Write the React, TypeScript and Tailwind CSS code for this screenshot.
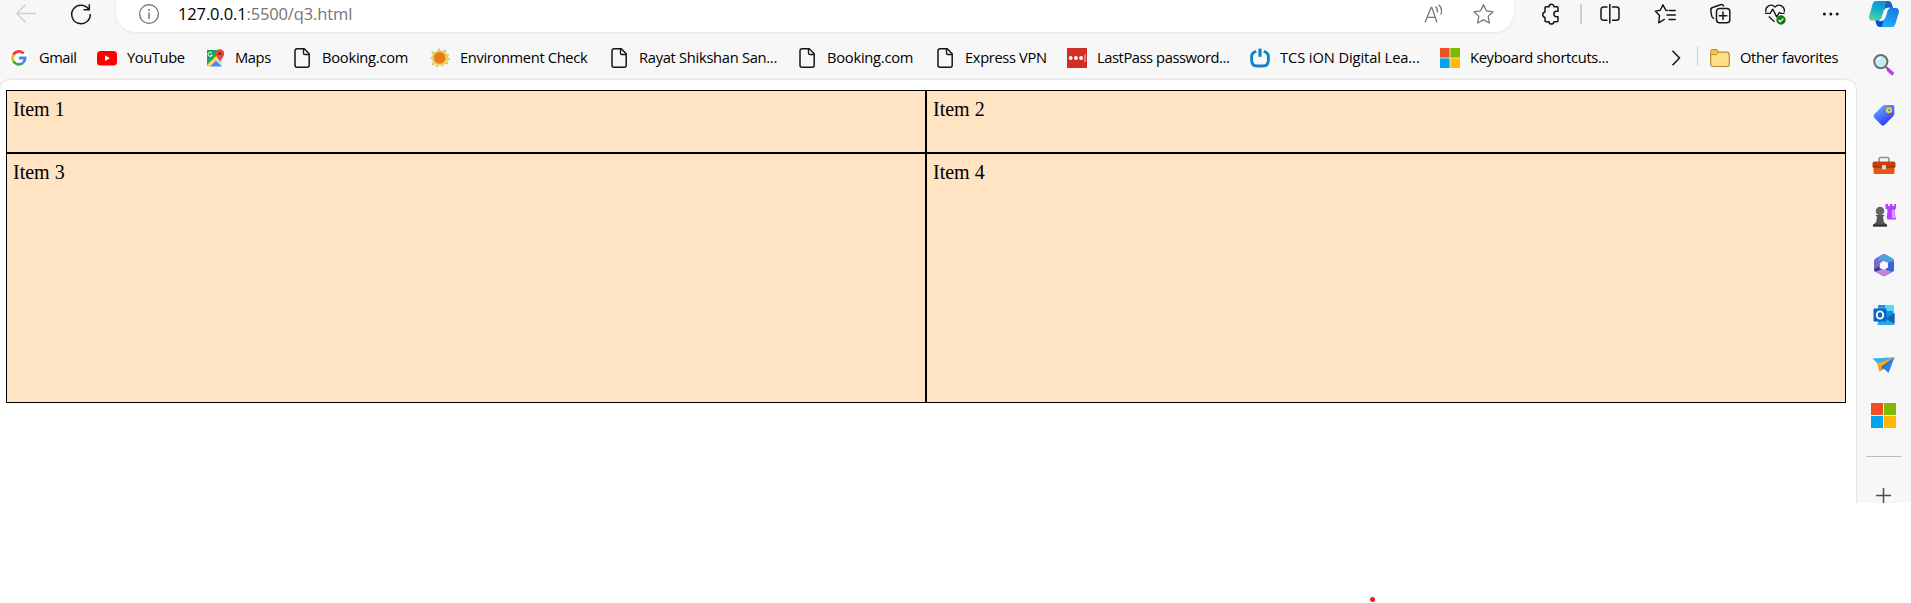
import type { ReactNode } from "react";

type IconProps = { w?: number; h?: number; children: ReactNode; className?: string };

function Icon({ w = 20, h = 20, children, className = "" }: IconProps) {
  return (
    <svg width={w} height={h} viewBox={`0 0 ${w} ${h}`} fill="none" className={`block shrink-0 overflow-visible ${className}`}>
      {children}
    </svg>
  );
}

const FileIcon = () => (
  <Icon>
    <path d="M5 .8h7.2l5 5v11.400a2 2 0 0 1-2 2H5a2 2 0 0 1-2-2V2.800a2 2 0 0 1 2-2Z" stroke="#161616" strokeWidth="1.500" />
    <path d="M11.500 1v4.200a1.300 1.300 0 0 0 1.300 1.300H17" stroke="#161616" strokeWidth="1.400" />
  </Icon>
);

const GoogleIcon = () => (
  <Icon>
    <circle cx="10" cy="10" r="10" fill="#fff" />
    <path d="M4.300 6.900A6.400 6.400 0 0 1 14.700 5.500" stroke="#ea4335" strokeWidth="2.800" />
    <path d="M4.300 6.900a6.400 6.400 0 0 0 0 6.200" stroke="#fbbc05" strokeWidth="2.800" />
    <path d="M4.300 13.100A6.400 6.400 0 0 0 13.900 15" stroke="#34a853" strokeWidth="2.800" />
    <path d="M10 10h6.200c0 2-.9 3.900-2.300 5" stroke="#4285f4" strokeWidth="2.800" />
  </Icon>
);

const YouTubeIcon = () => (
  <Icon>
    <rect x="0" y="3" width="20" height="14.500" rx="3.500" fill="#f00" />
    <path d="m8 7.300 5 2.900-5 2.900Z" fill="#fff" />
  </Icon>
);

const MapsIcon = () => (
  <Icon>
    <path d="M2 2h15v16H2Z" fill="#dfe3e6" />
    <path d="M2 2h11L2 13Z" fill="#1b9a59" />
    <path d="M2 12 11 3l3 4L3 18H2Z" fill="#22a463" />
    <path d="M2 17 13 6l2 2L4 19Z" fill="#ffd94a" />
    <path d="m5 18.500 6-6 6 6Z" fill="#4a89f3" />
    <path d="M7 5.200A2.100 2.100 0 1 0 7.200 7H5.300" stroke="#fff" strokeWidth="1" />
    <path d="M15 14.500c-.4-3.500-4.200-5-4.200-9a4.200 4.200 0 0 1 8.400 0c0 4-3.800 5.500-4.200 9Z" fill="#e04a3f" />
    <circle cx="15" cy="5.500" r="1.600" fill="#7d2a24" />
  </Icon>
);

const SunIcon = () => (
  <Icon>
    <path d="m9 .5 2 3.600L15.500 2l.2 4.200 3 .5-1.400 3 2.700 1.300-3.300 1.500 1 3.500-3.900-.5-1.500 2.500-2.600-1.500L6.500 19l-.8-3.700L2.500 17l.7-4L1 9.500l2.500-1.300L1.800 3.800l4.400 1Z" fill="#f4dc62" stroke="#b8a449" strokeWidth=".5" />
    <circle cx="9.600" cy="9.800" r="5.800" fill="#ea7a16" stroke="#cf9438" strokeWidth=".6" />
  </Icon>
);

const LastPassIcon = () => (
  <Icon>
    <path d="M0 0h20v20H0Z" fill="#d32d27" />
    <circle cx="3.700" cy="10" r="1.900" fill="#fff" />
    <circle cx="8.900" cy="10" r="1.900" fill="#fff" />
    <circle cx="14.100" cy="10" r="1.900" fill="#fff" />
    <path d="M18 6.300v7.500" stroke="#f6c9c7" strokeWidth="1" />
  </Icon>
);

const PowerIcon = () => (
  <Icon>
    <path d="M6.300 3.300C3.300 4.100 1.600 5.800 1.600 8.500v3.500c0 4 2 6 5.500 6h5.800c3.500 0 5.500-2 5.500-6V8.500c0-2.700-1.700-4.400-4.700-5.200" stroke="#1480c8" strokeWidth="2.900" />
    <path d="M10 .6v8.200" stroke="#1480c8" strokeWidth="3.200" />
  </Icon>
);

function MicrosoftIcon({ size }: { size: number }) {
  return (
    <svg width={size} height={size} viewBox="0 0 25 25" className="block shrink-0">
      <path d="M0 0h25v25H0Z" fill="#f6efdc" />
      <path d="M0 0h12v12H0Z" fill="#f25022" />
      <path d="M13 0h12v12H13Z" fill="#7fba00" />
      <path d="M0 13h12v12H0Z" fill="#00a4ef" />
      <path d="M13 13h12v12H13Z" fill="#ffb900" />
    </svg>
  );
}

type Favorite = { label: string; icon: ReactNode; slot: string; tracking: string };

const favorites: Favorite[] = [
  { label: "Gmail", icon: <GoogleIcon />, slot: "w-[88px]", tracking: "tracking-[-0.5px]" },
  { label: "YouTube", icon: <YouTubeIcon />, slot: "w-[108px]", tracking: "tracking-[-0.4px]" },
  { label: "Maps", icon: <MapsIcon />, slot: "w-[87px]", tracking: "tracking-[-0.4px]" },
  { label: "Booking.com", icon: <FileIcon />, slot: "w-[138px]", tracking: "tracking-[-0.25px]" },
  { label: "Environment Check", icon: <SunIcon />, slot: "w-[179px]", tracking: "tracking-[-0.35px]" },
  { label: "Rayat Shikshan San...", icon: <FileIcon />, slot: "w-[188px]", tracking: "tracking-[-0.29px]" },
  { label: "Booking.com", icon: <FileIcon />, slot: "w-[138px]", tracking: "tracking-[-0.25px]" },
  { label: "Express VPN", icon: <FileIcon />, slot: "w-[132px]", tracking: "tracking-[-0.35px]" },
  { label: "LastPass password...", icon: <LastPassIcon />, slot: "w-[183px]", tracking: "tracking-[-0.42px]" },
  { label: "TCS iON Digital Lea...", icon: <PowerIcon />, slot: "w-[190px]", tracking: "tracking-[-0.1px]" },
  { label: "Keyboard shortcuts...", icon: <MicrosoftIcon size={20} />, slot: "w-[231px]", tracking: "tracking-[-0.32px]" },
];

function AddressRow() {
  return (
    <div className="flex h-8 items-start">
      <div className="flex h-7 w-[116px] items-center gap-[35px] pl-4">
        <Icon>
          <path d="M20 9.500H1M9.500.8.800 9.500l8.700 8.700" stroke="#cfcfcf" strokeWidth="1.400" />
        </Icon>
        <Icon>
          <path d="M17.700 5.200A9.300 9.300 0 1 0 19.300 10M18.300.3v5.500h-5.800" stroke="#161616" strokeWidth="1.500" />
        </Icon>
      </div>
      <div className="flex h-8 w-[1398px] items-start rounded-b-[20px] bg-white pl-[23px] shadow-[0_1px_3px_rgba(0,0,0,0.08)]">
        <div className="flex h-7 flex-1 items-center">
          <Icon>
            <circle cx="10" cy="10" r="9.400" stroke="#6b6b6b" strokeWidth="1.200" />
            <path d="M10 8.500V15" stroke="#6b6b6b" strokeWidth="1.400" />
            <circle cx="10" cy="5.900" r="1" fill="#6b6b6b" />
          </Icon>
          <p className="ml-[19px] text-[16.5px] tracking-[-0.13px] text-[#767676]">
            <span className="text-black">127.0.0.1</span>:5500/q3.html
          </p>
        </div>
        <div className="flex h-7 w-[90px] items-center gap-[29px]">
          <Icon>
            <path d="M1 18.500 7.200 3.300h.6L13 18.500M3.200 13.300h8" stroke="#767676" strokeWidth="1.300" />
            <path d="M11.500 2.500c1.800 1.700 2.300 3.700 2 6M14.600.7c3 2.700 3.600 6.500 2.200 10" stroke="#767676" strokeWidth="1.200" />
          </Icon>
          <Icon>
            <path d="m10.500.8 2.900 6 6.600 1-4.800 4.600 1.200 6.600-5.900-3.100L4.600 19l1.200-6.600L1 7.800l6.600-1Z" stroke="#767676" strokeWidth="1.300" strokeLinejoin="round" />
          </Icon>
        </div>
      </div>
      <div className="flex h-7 flex-1 items-center pl-[25.500px] text-[#161616]">
        <Icon>
          <path d="M6 2.700h3.100a2.400 2.400 0 0 1 4.800 0H17a1 1 0 0 1 1 1v3.600h-1.400a2.700 2.700 0 0 0 0 5.400H18v4a1 1 0 0 1-1 1h-3.100a2.400 2.400 0 0 1-4.800 0H6a1 1 0 0 1-1-1v-3.300a2.800 2.800 0 0 1 0-5.500V3.700a1 1 0 0 1 1-1Z" stroke="currentColor" strokeWidth="1.500" strokeLinejoin="round" />
        </Icon>
        <span className="ml-[20px] h-5 w-[2px] bg-[#cdcdcd]" />
        <Icon className="ml-[18.500px]">
          <path d="M7.500 3h-4A2.500 2.500 0 0 0 1 5.500v8.200a2.500 2.500 0 0 0 2.500 2.500h4M12 3h4.500A2.500 2.500 0 0 1 19 5.500v8.200a2.500 2.500 0 0 1-2.500 2.500H12M9.800 0v19.500" stroke="currentColor" strokeWidth="1.500" />
        </Icon>
        <Icon className="ml-[35px]">
          <path d="M12.700 6.500 10.800 6.200 7.900.8 5.300 6.300l-5 .8 4.200 4.300-.8 7.400 5.600-3.500M14.300 6.500H20.300M12 11h8.300M14 15.500h6.300" stroke="currentColor" strokeWidth="1.400" strokeLinejoin="round" strokeLinecap="round" />
        </Icon>
        <Icon className="ml-[35px]">
          <path d="M4.200 14.500A3 3 0 0 1 1.700 12L.800 6.500a3 3 0 0 1 2.500-3.300L10.500.700a2.800 2.800 0 0 1 3.300 1.800" stroke="currentColor" strokeWidth="1.500" />
          <rect x="6.500" y="4.500" width="13.300" height="14.300" rx="3" stroke="currentColor" strokeWidth="1.500" />
          <path d="M13 7.500v8.400M8.800 11.700h8.500" stroke="currentColor" strokeWidth="1.500" />
        </Icon>
        <Icon className="ml-[35px]">
          <path d="M1 8C-.3 2.500 6.300-1.200 10 3.100 13.700-1.200 20.500 2.400 19.200 8M3.800 12.500l5.700 5.300M0 9.300h5.200l2.500-4.200 4 7.800 2.700-4.500 1.200 1h4" stroke="currentColor" strokeWidth="1.300" strokeLinejoin="round" />
          <circle cx="16" cy="16" r="4.700" fill="#107c10" />
          <path d="m13.600 16 1.700 1.700 3-3.200" stroke="#fff" strokeWidth="1.200" />
        </Icon>
        <Icon className="ml-[35.500px]">
          <circle cx="3.400" cy="10" r="1.500" fill="currentColor" />
          <circle cx="9.800" cy="10" r="1.500" fill="currentColor" />
          <circle cx="16.200" cy="10" r="1.500" fill="currentColor" />
        </Icon>
      </div>
    </div>
  );
}

function FavoritesBar() {
  return (
    <div className="flex h-12 items-center pt-1 pl-[9px] text-[14.700px] text-black">
      {favorites.map((item, i) => (
        <div key={i} className={`flex shrink-0 items-center gap-[10px] whitespace-nowrap ${item.slot}`}>
          {item.icon}
          <span className={`pb-[2px] ${item.tracking}`}>{item.label}</span>
        </div>
      ))}
      <Icon w={10} h={16}>
        <path d="m1.500.8 7 7.200-7 7.200" stroke="#161616" strokeWidth="1.500" />
      </Icon>
      <span className="mb-1 ml-[16px] h-5 w-px bg-[#cfcfcf]" />
      <Icon className="ml-[12px]">
        <path d="M.7 4c0-1.500.8-2.300 2.300-2.300h3.500L9 4.200h7.500c1.800 0 2.800 1 2.800 2.700V16c0 1.600-1 2.500-2.500 2.500H3.200C1.600 18.500.7 17.600.7 16Z" fill="#ffe08a" stroke="#b8892c" strokeWidth="1.200" />
        <path d="M1.200 4.300c0-1.300.6-2 1.900-2h3.300l2 2-2 2.200H1.200Z" fill="#f3c53b" />
        <path d="M.9 6.700h5.500l2.500-2.400" stroke="#b8892c" strokeWidth="1" />
      </Icon>
      <span className="ml-[10px] pb-[2px] tracking-[-0.34px] whitespace-nowrap">Other favorites</span>
    </div>
  );
}

const sidebarApps: ReactNode[] = [
  <Icon w={24} h={24}>
    <path d="m14 14 2.800 2.800" stroke="#666" strokeWidth="2.300" />
    <path d="m16.500 17 3.700 3.300" stroke="#b73cf2" strokeWidth="3.600" strokeLinecap="round" />
    <circle cx="8.800" cy="8.600" r="6.600" fill="#c5e9fb" stroke="#6c6c6c" strokeWidth="2" />
    <path d="M5.300 7.800a4.500 4.500 0 0 1 3.700-3.300" stroke="#eefaff" strokeWidth="2" />
  </Icon>,
  <Icon w={24} h={24}>
    <path d="M12.500 2h8.300a1.500 1.500 0 0 1 1.500 1.500V11a3 3 0 0 1-.9 2l-8.700 8.700a2.500 2.500 0 0 1-3.500 0l-7-7a2.500 2.500 0 0 1 0-3.500l8.200-8.300a3 3 0 0 1 2.100-.9Z" fill="url(#tagBlue)" />
    <circle cx="17" cy="7.200" r="2.100" fill="#4f83f3" stroke="#ffd21f" strokeWidth="1.900" />
    <defs><linearGradient id="tagBlue" x1="4" y1="3" x2="16" y2="22" gradientUnits="userSpaceOnUse"><stop stopColor="#67b4ff" /><stop offset="1" stopColor="#3032f5" /></linearGradient></defs>
  </Icon>,
  <Icon w={24} h={24}>
    <path d="M7 9V6.500A2 2 0 0 1 9 4.500h6a2 2 0 0 1 2 2V9" stroke="#8b8f91" strokeWidth="1.500" />
    <path d="M1.500 12h21v7.500a1.500 1.500 0 0 1-1.500 1.500H3a1.500 1.500 0 0 1-1.500-1.500Z" fill="#e0570f" />
    <path d="M2.500 8.500h19a2 2 0 0 1 2 2v3.800H.5v-3.800a2 2 0 0 1 2-2Z" fill="#c93e0d" />
    <path d="M1 14h22" stroke="#94300d" />
    <rect x="10" y="12" width="4" height="4.500" rx=".8" fill="#d4dde0" />
  </Icon>,
  <Icon w={24} h={24}>
    <path d="M13.500 1H16v2h2V1h2.500v2h1.700V1H24v4.500L22.500 7l.8 7 1 2.500h-9L14.700 14l.9-7L13.500 5.500Z" fill="#b641ff" />
    <path d="M20 7h2l1 8h-3Z" fill="#dda0ff" />
    <circle cx="8" cy="8" r="4.300" fill="#666" />
    <path d="M3.500 12h9l-1 1.500H11l.8 5.500 3.200 3v1.500H1V22l3.200-3 .8-5.500h-.5Z" fill="#555" />
    <path d="M1 22.500h14" stroke="#2b2b2b" strokeWidth="1.800" />
  </Icon>,
  <Icon w={24} h={24}>
    <path d="M10.500 1.600a3 3 0 0 1 3 0l7 4a3 3 0 0 1 1.500 2.600v8a3 3 0 0 1-1.500 2.600l-7 4a3 3 0 0 1-3 0l-7-4A3 3 0 0 1 2 16.200v-8a3 3 0 0 1 1.500-2.600Z" fill="#7469cd" />
    <path d="M8 3 10.500 1.600a3 3 0 0 1 3 0l7 4a3 3 0 0 1 1.500 2.600V14l-7.500-5L10 6.500 5 9Z" fill="#49a2e2" />
    <path d="M22 9v7.200a3 3 0 0 1-1.500 2.600l-5 2.800-2.500-4.800 3.500-3.300V9.500l2-1Z" fill="#3a62d2" />
    <path d="m3.500 18.800 7 4a3 3 0 0 0 3 0l6.500-3.700-5.500-2-5.500-1-5.500 1.500Z" fill="#c084dc" />
    <path d="M3.500 18.800A3 3 0 0 1 2 16.200L7.500 13v2l2 1.500Z" fill="#40407f" />
    <path d="m11 7.800 5 2v4.500l-3.500 2.800-4.700-2v-4.500Z" fill="#f7f7f7" />
  </Icon>,
  <Icon w={24} h={24}>
    <rect x="6" y="2" width="15.500" height="18" rx="1" fill="#1490df" />
    <path d="M13 2h8.500v6H13Z" fill="#50d9ff" />
    <path d="M6 4h7v6H6Z" fill="#28a8ea" />
    <path d="m5 21 17.500-11v10.500a1.500 1.500 0 0 1-1.500 1.500H6.500A1.500 1.500 0 0 1 5 20.500Z" fill="#28a8ea" />
    <path d="M13 15.500 22.500 21V10Z" fill="#1066b5" />
    <rect x="1.500" y="5.500" width="13" height="13" rx="1.200" fill="#0a66c2" />
    <ellipse cx="8" cy="12" rx="3.200" ry="3.600" stroke="#fff" strokeWidth="1.900" />
  </Icon>,
  <Icon w={24} h={24}>
    <path d="m.5 5.500 22-1.300-12.300 8.300L6 11Z" fill="#30b3f0" />
    <path d="M22.500 4.200 16.500 20l-4.300-4-3 1-.2-4.500Z" fill="#2f80ef" />
    <path d="M22 4.500 5 10.500l2.500 8.500 2-5Z" fill="#f7a90c" />
    <path d="m9.500 13.500 1.500 1.800L7.500 19Z" fill="#d27d0c" />
    <path d="m9.500 13.700 13-9.500-11.300 11.300Z" fill="#256bd8" />
  </Icon>,
  <MicrosoftIcon size={25} />,
];

function Sidebar() {
  return (
    <aside className="flex w-[54px] shrink-0 flex-col items-center bg-[#f7f7f7] pr-px">
      <div className="flex h-10 w-full items-start justify-center">
        <Icon w={30} h={28}>
          <defs>
            <linearGradient id="pilotA" x1="12" y1="1" x2="5" y2="21" gradientUnits="userSpaceOnUse"><stop stopColor="#0a91de" /><stop offset=".45" stopColor="#13b0cf" /><stop offset="1" stopColor="#55d894" /></linearGradient>
            <linearGradient id="pilotB" x1="24" y1="7" x2="16" y2="27" gradientUnits="userSpaceOnUse"><stop stopColor="#1f78e0" /><stop offset="1" stopColor="#1baefa" /></linearGradient>
          </defs>
          <path d="M7.500 1h11c3 0 3.700 1.500 4.500 4l1 3h-4.500c-2.500 0-3.500 1-4.200 3.500L13 18c-.8 1.600-1.800 2.500-3.500 2.500H3.800C.5 20.500-.5 18.500.3 15.500L3.500 4.500C4.200 2 5.300 1 7.500 1Z" fill="url(#pilotA)" />
          <path d="M22.500 27h-11C8.800 27 8 25.700 7.200 23.500L6.300 20.500h3.800c2.300 0 3.400-1.200 4.200-3.700L17 8h9c3.400 0 4.500 2 3.700 5l-3.200 10.500C25.800 26 24.700 27 22.500 27Z" fill="url(#pilotB)" />
          <path d="M6.300 20.500h3.800c2.300 0 3.400-1.200 4.200-3.700l1 .2L13 27h-1.500C8.800 27 8 25.700 7.200 23.500Z" fill="#1646d4" />
          <path d="M17 1h1.500c3 0 3.700 1.500 4.500 4l1 3h-4.500c-2 0-3.200.7-4 2.500Z" fill="#1763c4" />
          <path d="M19 8.500c-2.200.2-3.200 1.300-3.800 3.200l-2 6.500c-.5 1.500-1.200 2.200-2.700 2.300 2.700.2 4.300-.7 5.300-3.500l2-6.500c.3-1 .6-1.500 1.200-2Z" fill="#f7f7f7" stroke="#f7f7f7" strokeWidth="1.700" />
        </Icon>
      </div>
      {sidebarApps.map((app, i) => (
        <div key={i} className="flex h-[50px] items-center justify-center">{app}</div>
      ))}
      <span className="mt-4 h-px w-[35px] bg-[#bcbcbc]" />
      <Icon w={16} h={15} className="mt-[31px]">
        <path d="M7.500 0v15M0 7.500h15" stroke="#4b4b4b" strokeWidth="1.500" />
      </Icon>
    </aside>
  );
}

function ItemGrid() {
  return (
    <div className="grid w-[1840px] grid-cols-2 grid-rows-[63px_250px] font-['Liberation_Serif',serif] text-[20px] leading-[23px] text-black">
      {["Item 1", "Item 2", "Item 3", "Item 4"].map((item) => (
        <div key={item} className="border border-black bg-[#ffe4c4] px-[6px] pt-[6.500px]">{item}</div>
      ))}
    </div>
  );
}

export default function App() {
  return (
    <div className="h-[603px] w-[1911px] overflow-hidden bg-white font-['Open_Sans','Noto_Sans',sans-serif]">
      <div className="flex h-[503px] overflow-hidden bg-[#f7f7f7]">
        <div className="flex w-[1857px] shrink-0 flex-col">
          <div className="w-[1857px]">
            <AddressRow />
            <FavoritesBar />
          </div>
          <main className="w-[1856px] flex-1 rounded-t-[10px] bg-white pt-[10px] pl-[6px] shadow-[0_0_3px_rgba(0,0,0,0.2)]">
            <ItemGrid />
          </main>
        </div>
        <Sidebar />
      </div>
      <div className="flex h-[100px] items-end pb-[1px] pl-[1370px]">
        <span className="size-[5px] rounded-full bg-[#e81c24]" />
      </div>
    </div>
  );
}
